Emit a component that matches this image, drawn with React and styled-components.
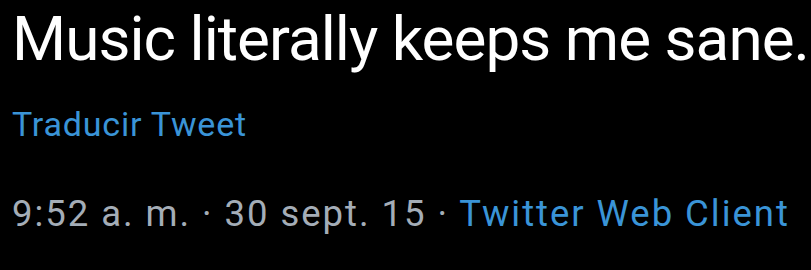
import React from 'react';
import styled, { createGlobalStyle } from 'styled-components';

const GlobalStyle = createGlobalStyle`
  html, body {
    margin: 0;
    padding: 0;
    background: #000;
  }
  body {
    font-family: Roboto, "Noto Sans", sans-serif;
  }
`;

const Tweet = styled.article`
  width: 811px;
  height: 270px;
  box-sizing: border-box;
  padding: 5px 12px 0;
  background: #000;
  display: flex;
  flex-direction: column;
  overflow: hidden;
`;

const Body = styled.p`
  margin: 0;
  color: #fff;
  font-size: 62px;
  line-height: 68px;
  white-space: nowrap;
  letter-spacing: -0.95px;
`;

const Translate = styled.a`
  margin-top: 31px;
  color: #3a94d7;
  font-size: 34px;
  line-height: 40px;
  letter-spacing: 0.8px;
  text-decoration: none;
`;

const Meta = styled.div`
  margin-top: 49px;
  color: #a4adb7;
  font-size: 36.5px;
  line-height: 42px;
  letter-spacing: 1.95px;
  white-space: nowrap;
`;

const Source = styled.a`
  color: #3a94d7;
  text-decoration: none;
`;

const App = () => {
  return (
    <>
      <GlobalStyle />
      <Tweet>
        <Body>Music literally keeps me sane.</Body>
        <Translate>Traducir Tweet</Translate>
        <Meta>
          9:52 a. m. · 30 sept. 15 · <Source>Twitter Web Client</Source>
        </Meta>
      </Tweet>
    </>
  );
};

export default App;
